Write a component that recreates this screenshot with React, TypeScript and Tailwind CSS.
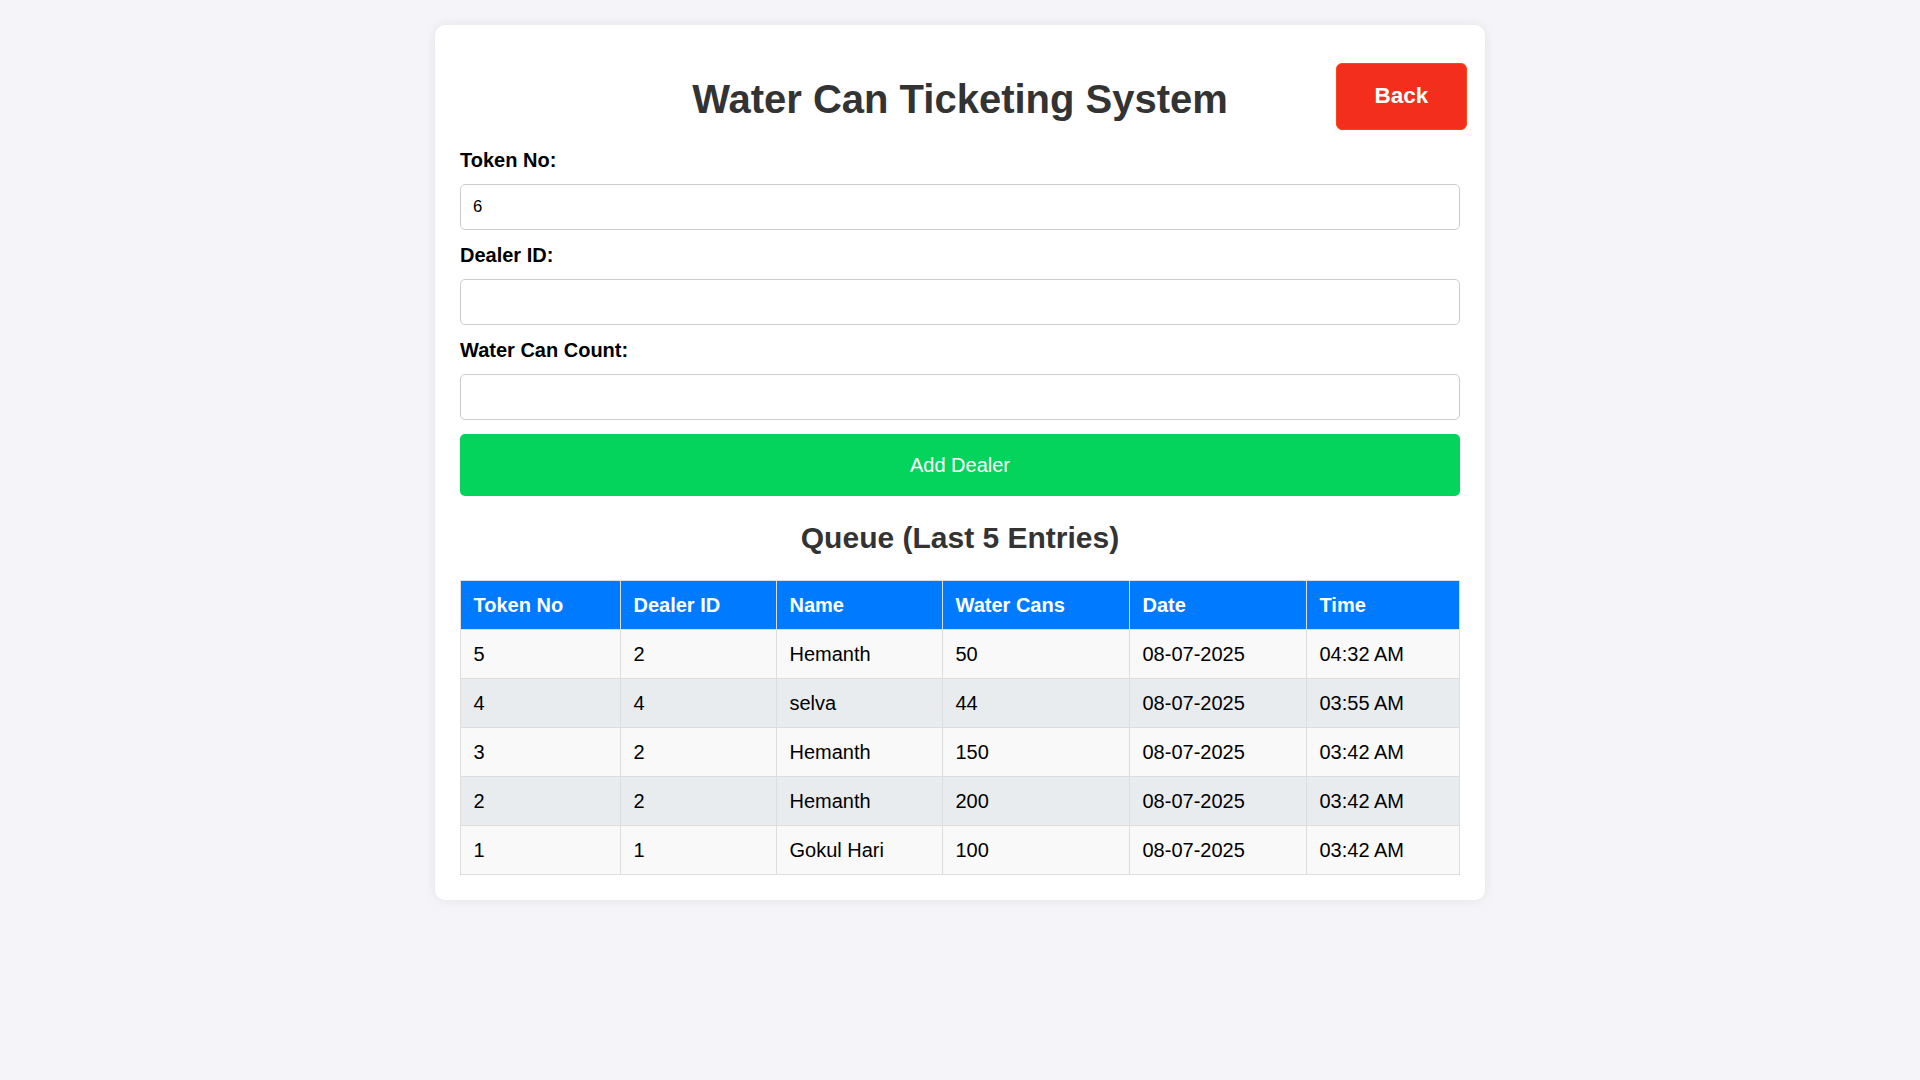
import { useState } from "react";

type Entry = {
  token: number;
  dealerId: number;
  name: string;
  cans: number;
  date: string;
  time: string;
};

const entries: Entry[] = [
  { token: 5, dealerId: 2, name: "Hemanth", cans: 50, date: "08-07-2025", time: "04:32 AM" },
  { token: 4, dealerId: 4, name: "selva", cans: 44, date: "08-07-2025", time: "03:55 AM" },
  { token: 3, dealerId: 2, name: "Hemanth", cans: 150, date: "08-07-2025", time: "03:42 AM" },
  { token: 2, dealerId: 2, name: "Hemanth", cans: 200, date: "08-07-2025", time: "03:42 AM" },
  { token: 1, dealerId: 1, name: "Gokul Hari", cans: 100, date: "08-07-2025", time: "03:42 AM" },
];

function Field({
  label,
  value,
  onChange,
}: {
  label: string;
  value: string;
  onChange: (v: string) => void;
}) {
  return (
    <div className="mb-[14px]">
      <label className="block text-[20px] leading-[23px] font-bold text-black mb-[12px]">
        {label}
      </label>
      <input
        value={value}
        onChange={(e) => onChange(e.target.value)}
        className="block w-full h-[46px] px-[12px] border border-[#cccccc] rounded-[5px] text-[16.7px] text-black bg-white outline-none"
      />
    </div>
  );
}

export default function App() {
  const [token, setToken] = useState("6");
  const [dealerId, setDealerId] = useState("");
  const [count, setCount] = useState("");

  const cell = "border border-[#dddddd] px-[12.5px] py-[12.5px] text-left text-[20px] leading-[23px]";

  return (
    <div className="min-h-screen bg-[#f4f4f9] pt-[25px] font-['Liberation_Sans',Arial,sans-serif]">
      <div className="relative mx-auto w-[1050px] bg-white rounded-[10px] p-[25px] shadow-[0_0_12px_rgba(0,0,0,0.08)]">
        {/* Header */}
        <h1 className="mt-[26px] mb-[27px] text-center text-[40px] leading-[46px] font-bold text-[#333333]">
          Water Can Ticketing System
        </h1>
        <button className="absolute top-[38px] right-[18px] w-[131px] h-[67px] flex items-center justify-center pb-[2px] rounded-[6px] bg-[#f32e1c] border border-[#ff4416] text-white text-[22.5px] font-bold">
          Back
        </button>

        {/* Form */}
        <Field label="Token No:" value={token} onChange={setToken} />
        <Field label="Dealer ID:" value={dealerId} onChange={setDealerId} />
        <Field label="Water Can Count:" value={count} onChange={setCount} />

        <button className="block w-full h-[62px] pb-[1px] rounded-[5px] bg-[#04d35c] text-white text-[20px]">
          Add Dealer
        </button>

        {/* Queue */}
        <h2 className="mt-[24px] mb-[25px] text-center text-[30px] leading-[35px] font-bold text-[#333333]">
          Queue (Last 5 Entries)
        </h2>

        <table className="w-full table-fixed border-collapse text-black">
          <thead>
            <tr className="bg-[#007bff] text-white">
              <th className={`${cell} w-[160px] font-bold`}>Token No</th>
              <th className={`${cell} w-[156px] font-bold`}>Dealer ID</th>
              <th className={`${cell} w-[166px] font-bold`}>Name</th>
              <th className={`${cell} w-[187px] font-bold`}>Water Cans</th>
              <th className={`${cell} w-[177px] font-bold`}>Date</th>
              <th className={`${cell} font-bold`}>Time</th>
            </tr>
          </thead>
          <tbody>
            {entries.map((e, i) => (
              <tr key={e.token} className={i % 2 === 0 ? "bg-[#f9f9f9]" : "bg-[#e9ecef]"}>
                <td className={cell}>{e.token}</td>
                <td className={cell}>{e.dealerId}</td>
                <td className={cell}>{e.name}</td>
                <td className={cell}>{e.cans}</td>
                <td className={cell}>{e.date}</td>
                <td className={cell}>{e.time}</td>
              </tr>
            ))}
          </tbody>
        </table>
      </div>
    </div>
  );
}
